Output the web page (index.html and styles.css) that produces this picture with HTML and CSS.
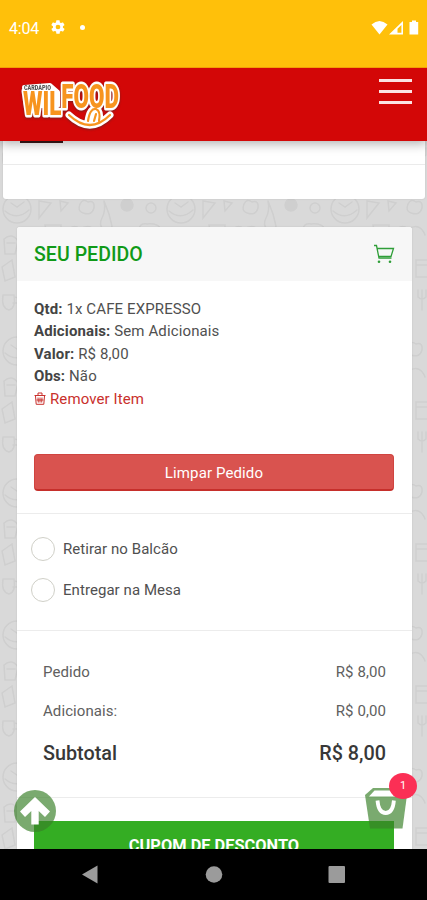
FILE: index.html
```html
<!DOCTYPE html>
<html lang="pt-BR">
<head>
<meta charset="utf-8">
<meta name="viewport" content="width=device-width, initial-scale=1">
<title>Wilfood</title>
<link rel="stylesheet" href="styles.css">
</head>
<body>
<div class="screen">
  <div class="status">
    <span class="time">4:04</span>
    <svg class="gear" viewBox="0 0 24 24"><path fill="#fff" fill-rule="evenodd" d="M19.4 13a7.500 7.500 0 0 0 0-2l2.100-1.600a.5.5 0 0 0 .1-.7l-2-3.400a.5.5 0 0 0-.6-.2l-2.500 1a7.300 7.300 0 0 0-1.700-1l-.4-2.700a.5.5 0 0 0-.5-.4h-4a.5.5 0 0 0-.5.4l-.4 2.700a7.700 7.700 0 0 0-1.700 1l-2.500-1a.5.5 0 0 0-.6.2l-2 3.400a.5.5 0 0 0 .1.700L4.500 11a7.900 7.900 0 0 0 0 2l-2.100 1.600a.5.5 0 0 0-.1.700l2 3.400c.1.200.4.300.6.200l2.500-1c.5.400 1.100.7 1.700 1l.4 2.700c0 .2.200.4.500.4h4c.2 0 .5-.2.500-.4l.4-2.700c.6-.3 1.200-.6 1.700-1l2.500 1c.2.100.5 0 .6-.2l2-3.400a.5.5 0 0 0-.1-.7zM12 15.500a3.500 3.500 0 1 1 0-7 3.500 3.500 0 0 1 0 7z"/></svg>
    <span class="dot"></span>
    <svg class="signals" viewBox="0 0 50 16"><path fill="#fff" d="M.5 4.500Q8.500-2.500 16.500 4.500L8.500 14.500z"/><path fill="#fff" fill-rule="evenodd" d="M18 14.500 32 1v13.500zM26.500 12.800h3.900V5l-3.900 3.800z"/><path fill="#fff" d="M41 .5h4V2h2.200v12.500h-8.700V2H41z"/></svg>
  </div>

  <header class="topbar">
    <svg class="logo" viewBox="0 0 110 56">
      <path d="M8 9 34 7 42 14 42 28 10 28z" fill="#fff" stroke="#fff" stroke-width="4" stroke-linejoin="round"/>
      <path d="M53 37Q74 57 94 37M72 43Q74 30 80 31Q85 33 83 43M78 43L80 36" fill="none" stroke="#fff" stroke-width="7" stroke-linecap="round"/>
      <text class="mark" x="7" y="37" textLength="96" lengthAdjust="spacingAndGlyphs" font-size="33">WIL<tspan dy="-7">FOOD</tspan></text>
      <path d="M53 37Q74 57 94 37M72 43Q74 30 80 31Q85 33 83 43M78 43L80 36" fill="none" stroke="#f7941e" stroke-width="2.200" stroke-linecap="round"/>
      <text class="tag" x="8" y="11.500" textLength="27" lengthAdjust="spacingAndGlyphs">CARDÁPIO</text>
    </svg>
    <span class="burger"><i></i><i></i><i></i></span>
  </header>

  <main class="content">
    <svg class="doodles" width="427" height="708">
      <defs>
        <pattern id="food" width="164" height="142" patternUnits="userSpaceOnUse">
          <g fill="none" stroke="#cfcfcf" stroke-width="1.500" stroke-linecap="round">
            <circle cx="17" cy="68" r="14"/><path d="M5 70q12 10 24-1M11 62l6 4 7-5"/>
            <path d="M39 60l12 2-12 15zM60 60l8 2-7 8z"/>
            <path d="M80 63q3-6 8-2 7-2 6 6-2 8-11 5-6-2-3-9"/>
            <path d="M104 60q2 10-2 17t2 12q6 4 8-4l-3-12-5-13"/>
            <circle cx="127" cy="64" r="6" fill="#cfcfcf"/><circle cx="151" cy="67" r="5"/>
            <path d="M45 84h16v16H48zM61 88q6-1 3 8M66 93q7-12 14-5 12-7 17 6"/>
            <path d="M139 88q1-6 8-5 11-1 14 5l-3 10h-16zM119 90l9 5-8 3"/>
            <path d="M4 98q8-7 14 2l-3 13H5zM7 102h8"/>
            <path d="M2 126l10-7 3 17-10 4zM27 122q8-6 12 4t-7 11q-9-2-5-15"/>
            <path d="M55 119l16 4-10 14zM88 119h15v17H88zM88 124h15M121 112q14 4 8 18-13 2-8-18M145 116q14-4 12 9-7 12-12-9"/>
            <path d="M3 12h11q2 13-5 15-8-2-6-15M14 14q6 0 5 6h-6"/>
            <circle cx="38" cy="17" r="9"/><circle cx="38" cy="17" r="4"/>
            <path d="M63 9q17-3 15 10-7 13-13 3zM94 7v20M90 7v7q4 4 8 0V7M112 13q9-12 16 1v9h-16zM143 8h13v15h-13"/>
          </g>
        </pattern>
      </defs>
      <rect width="427" height="708" fill="#d9d9d9"/>
      <rect width="427" height="708" fill="url(#food)"/>
    </svg>

    <section class="previous"><div class="previous-end"><span></span></div></section>

    <section class="order">
      <div class="order-head">
        <h1>SEU PEDIDO</h1>
        <svg class="cart" viewBox="0 0 22 20"><path d="M1 1.500h2.500L6 14.200h12.500M4.500 4.500h16l-2.500 8H6" fill="none" stroke="#2f9e38" stroke-width="1.300"/><circle cx="6" cy="17.800" r="1.300" fill="#2f9e38"/><circle cx="17" cy="17.800" r="1.300" fill="#2f9e38"/></svg>
      </div>
      <div class="item">
        <p><b>Qtd:</b> 1x CAFE EXPRESSO</p>
        <p><b>Adicionais:</b> Sem Adicionais</p>
        <p><b>Valor:</b> R$ 8,00</p>
        <p><b>Obs:</b> Não</p>
        <p class="remove"><svg viewBox="0 0 12 13"><path d="M.5 3.500h11M4 3V1h4v2M1.500 4l.7 8.300h7.600l.7-8.300M4 5.500l.3 5M8 5.500l-.3 5M6 5.500v5M2.500 8h7" fill="none" stroke="#c9302c" stroke-width="1"/></svg><span>Remover Item</span></p>
        <div class="clear">Limpar Pedido</div>
      </div>
      <div class="options">
        <label><i></i><span>Retirar no Balcão</span></label>
        <label><i></i><span>Entregar na Mesa</span></label>
      </div>
      <div class="totals">
        <div class="row"><span>Pedido</span><span>R$ 8,00</span></div>
        <div class="row"><span>Adicionais:</span><span>R$ 0,00</span></div>
        <div class="row total"><span>Subtotal</span><span>R$ 8,00</span></div>
      </div>
      <div class="coupon-wrap"><div class="coupon">CUPOM DE DESCONTO</div></div>
    </section>

    <svg class="to-top" viewBox="0 0 42 42"><circle cx="21" cy="21" r="21" fill="#388028" fill-opacity=".67"/><path d="M21 7 36 21.500 31 27 24.700 21V34.500H17.300V21L11 27 6 21.500z" fill="#fff"/></svg>
    <div class="bag">
      <svg viewBox="0 0 42 41"><path d="M8 0H35L42 7 37.500 40.500H5L0 7z" fill="#388028" fill-opacity=".67"/><path d="M9.500 2.500H33L38 8.500H4z" fill="#fff"/><path d="M12.500 12.500q1 12.500 8.200 12.500t8.200-12.500" fill="none" stroke="#fff" stroke-width="3.800"/></svg>
      <span class="badge">1</span>
    </div>
  </main>

  <nav class="android">
    <svg viewBox="0 0 427 51"><path d="M82 25.500 97.500 16.500v18z" fill="#9b9b9b"/><circle cx="214" cy="25.500" r="8.300" fill="#9b9b9b"/><rect x="328.500" y="17" width="16.500" height="17" rx="1" fill="#9b9b9b"/></svg>
  </nav>
</div>
</body>
</html>
```
FILE: styles.css
```css
* { box-sizing: border-box; }
body { margin: 0; font-family: Roboto, sans-serif; color: #505050; }
h1, p { margin: 0; }
svg { display: block; }
.screen { width: 427px; height: 900px; overflow: hidden; display: flex; flex-direction: column; }

.status { position: relative; z-index: 3; height: 68px; flex: none; background: #ffc00a; display: flex; align-items: flex-start; padding: 19px 6px 0 9px; color: #fff; border-bottom: 1px solid #f0a008; }
.time { font-size: 16px; line-height: 19px; width: 31px; letter-spacing: -.2px; }
.gear { width: 16px; height: 16px; margin-left: 10px; }
.dot { width: 5px; height: 5px; border-radius: 50%; background: #fff; margin: 6px 0 0 14px; }
.signals { width: 50px; height: 16px; margin: 1px 0 0 auto; }

.topbar { position: relative; z-index: 2; height: 73px; flex: none; background: #d30707; display: flex; justify-content: space-between; padding: 10px 15px 0 16px; box-shadow: 0 2px 11px rgba(0, 0, 0, .35); }
.logo { width: 110px; height: 56px; overflow: visible; filter: drop-shadow(0 1px 1px #7c2020); }
.mark { font-weight: 900; fill: #f7941e; stroke: #fff; stroke-width: 5; stroke-linejoin: round; paint-order: stroke; }
.tag { font-size: 6.500px; font-weight: 900; fill: #555; }
.burger { display: flex; flex-direction: column; gap: 8.500px; width: 33px; padding-top: 1px; }
.burger i { height: 2.500px; background: #fbe3e3; }

.content { position: relative; flex: 1; min-height: 0; overflow: hidden; }
.doodles { position: absolute; inset: 0; z-index: -1; }

.previous { margin: 0 2px 0 3px; height: 58px; background: #fff; border-radius: 0 0 3px 3px; box-shadow: 0 0 2px rgba(0, 0, 0, .12); }
.previous-end { height: 24px; border-bottom: 1px solid #ebebeb; padding: 0 27px 0 17px; }
.previous-end span { display: block; width: 43px; height: 2px; background: #3a1a1a; }

.order { margin: 28px 15px 0 17px; background: #fff; border-radius: 3px; overflow: hidden; box-shadow: 0 0 2px rgba(0, 0, 0, .12); }
.order-head { height: 54px; background: #f7f7f7; display: flex; justify-content: space-between; align-items: center; padding: 0 17px; }
.order-head h1 { font-size: 19.500px; font-weight: 500; letter-spacing: .05px; color: #109a18; }
.cart { width: 22px; height: 20px; }

.item { height: 233px; padding: 16.500px 18px 0 17px; font-size: 15px; line-height: 22.500px; letter-spacing: .12px; border-bottom: 1px solid #ececec; }
.item b { font-weight: 700; color: #444; }
.item .remove { display: flex; align-items: center; color: #c9302c; letter-spacing: .1px; }
.remove svg { width: 12px; height: 13px; margin-right: 4px; }
.clear { margin-top: 44px; height: 37px; line-height: 36px; text-align: center; color: #fff; font-size: 15px; background: #d9534f; border: 1px solid #d04440; border-bottom: 2px solid #c62f2b; border-radius: 4px; }

.options { height: 117px; padding: 23px 14px 0; border-bottom: 1px solid #ececec; }
.options label { display: flex; align-items: center; height: 24px; margin-bottom: 17px; font-size: 15px; letter-spacing: .06px; }
.options span { margin-top: -1px; }
.options i { width: 24px; height: 24px; border: 1px solid #d0d0c8; border-radius: 50%; margin-right: 8px; }

.totals { height: 167px; padding: 22px 26px 0; border-bottom: 1px solid #ececec; }
.row { display: flex; justify-content: space-between; height: 39px; line-height: 39px; font-size: 15px; letter-spacing: .08px; color: #606060; }
.total { height: 45px; line-height: 45px; font-size: 19.800px; font-weight: 500; letter-spacing: 0; color: #383838; }
.coupon-wrap { padding: 23px 18px 20px 17px; }
.coupon { height: 48px; line-height: 49px; background: #34ad23; color: #fff; text-align: center; font-size: 16.400px; font-weight: 700; }

.to-top { position: absolute; left: 14px; top: 649px; width: 42px; height: 42px; }
.bag { position: absolute; left: 365px; top: 647px; width: 42px; height: 41px; }
.bag svg { width: 42px; height: 41px; }
.badge { position: absolute; left: 24px; top: -15px; width: 28px; height: 26px; border-radius: 50%; background: #fb2f55; color: #fff; font-size: 11px; line-height: 26px; text-align: center; }

.android { height: 51px; flex: none; background: #000; position: relative; z-index: 3; }
.android svg { width: 427px; height: 51px; }
```
